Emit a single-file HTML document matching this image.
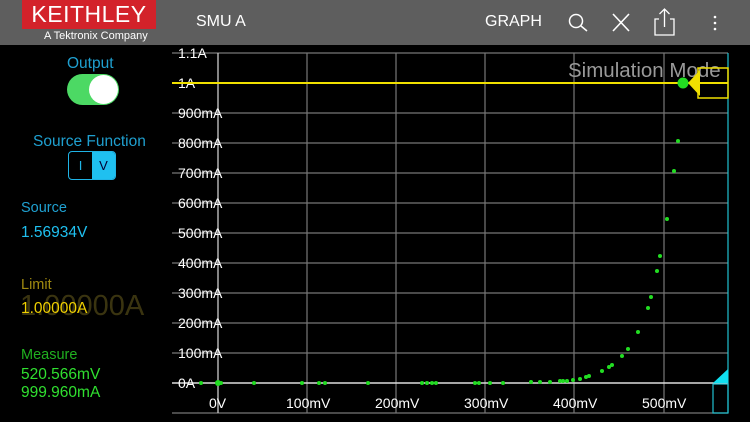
<!DOCTYPE html>
<html><head><meta charset="utf-8"><style>
body{margin:0;width:750px;height:422px;background:#000;overflow:hidden;font-family:"Liberation Sans",sans-serif;position:relative}
.bar{position:absolute;left:0;top:0;width:750px;height:45px;background:#5e5e5e}
.t{position:absolute;white-space:nowrap}
</style></head><body>
<div class="bar"></div>
<div class="t" style="left:22px;top:0;width:134px;height:29px;background:#d3222a;color:#fff;font-size:23px;line-height:29px;text-align:center;letter-spacing:0.5px">KEITHLEY</div>
<div class="t" style="left:44px;top:30px;color:#fff;font-size:11px">A Tektronix Company</div>
<div class="t" style="left:196px;top:13px;color:#fff;font-size:16px">SMU A</div>
<div class="t" style="left:485px;top:13px;color:#fff;font-size:16px">GRAPH</div>
<svg style="position:absolute;left:0;top:0" width="750" height="45">
<circle cx="576" cy="21" r="6.5" fill="none" stroke="#fff" stroke-width="1.5"/><line x1="581" y1="26" x2="587" y2="31" stroke="#fff" stroke-width="1.5"/>
<path d="M613 14 L629 31 M629 14 L613 31" stroke="#fff" stroke-width="1.6"/>
<path d="M659 19 H655 V35 H674 V19 H670 M664.5 27 V9 M659.5 14 L664.5 9 L669.5 14" fill="none" stroke="#fff" stroke-width="1.3"/>
<circle cx="715" cy="17" r="1.3" fill="#fff"/><circle cx="715" cy="23" r="1.3" fill="#fff"/><circle cx="715" cy="29" r="1.3" fill="#fff"/>
</svg>
<div class="t" style="left:67px;top:55px;color:#1fa0d0;font-size:15.5px">Output</div>
<div style="position:absolute;left:67px;top:74px;width:52px;height:31px;border-radius:16px;background:#4cd964"></div>
<div style="position:absolute;left:89px;top:75px;width:29px;height:29px;border-radius:15px;background:#fff"></div>
<div class="t" style="left:33px;top:133px;color:#1fa0d0;font-size:15.5px">Source Function</div>
<div style="position:absolute;left:68px;top:151px;width:46px;height:27px;border:1px solid #1fb4e6;border-radius:4px;overflow:hidden">
<div style="position:absolute;left:0;top:0;width:23px;height:27px;color:#1fb4e6;font-size:13px;line-height:27px;text-align:center">I</div>
<div style="position:absolute;left:23px;top:0;width:23px;height:27px;background:#1fc0f0;color:#003;font-size:13px;line-height:27px;text-align:center">V</div></div>
<div class="t" style="left:21px;top:200px;color:#1fa0d0;font-size:14.5px">Source</div>
<div class="t" style="left:21px;top:224px;color:#1fc0f0;font-size:15.5px">1.56934V</div>
<div class="t" style="left:21px;top:277px;color:#a08a10;font-size:14.5px">Limit</div>
<div class="t" style="left:20px;top:290px;color:#3a3410;font-size:29px">1.00000A</div>
<div class="t" style="left:21px;top:300px;color:#f0d000;font-size:15.5px">1.00000A</div>
<div class="t" style="left:21px;top:347px;color:#20b020;font-size:14.5px">Measure</div>
<div class="t" style="left:21px;top:366px;color:#30e030;font-size:15.5px">520.566mV</div>
<div class="t" style="left:21px;top:384px;color:#30e030;font-size:15.5px">999.960mA</div>
<svg style="position:absolute;left:0;top:0" width="750" height="422" font-family="Liberation Sans,sans-serif" font-size="14" fill="#fff">
<g stroke="#777" stroke-width="1.2">
<line x1="172" y1="53" x2="728" y2="53"/><line x1="172" y1="113" x2="728" y2="113"/><line x1="172" y1="143" x2="728" y2="143"/><line x1="172" y1="173" x2="728" y2="173"/><line x1="172" y1="203" x2="728" y2="203"/><line x1="172" y1="233" x2="728" y2="233"/><line x1="172" y1="263" x2="728" y2="263"/><line x1="172" y1="293" x2="728" y2="293"/><line x1="172" y1="323" x2="728" y2="323"/><line x1="172" y1="353" x2="728" y2="353"/><line x1="172" y1="413" x2="728" y2="413"/>
<line x1="307" y1="53" x2="307" y2="413"/><line x1="396" y1="53" x2="396" y2="413"/><line x1="485" y1="53" x2="485" y2="413"/><line x1="574" y1="53" x2="574" y2="413"/><line x1="664" y1="53" x2="664" y2="413"/>
</g>
<line x1="218" y1="53" x2="218" y2="413" stroke="#ccc" stroke-width="1.3"/>
<line x1="172" y1="383" x2="728" y2="383" stroke="#ddd" stroke-width="1.5"/>
<line x1="728" y1="53" x2="728" y2="413" stroke="#20c0d0" stroke-width="1.2"/>
<text x="178" y="58">1.1A</text><text x="178" y="88">1A</text><text x="178" y="118">900mA</text><text x="178" y="148">800mA</text><text x="178" y="178">700mA</text><text x="178" y="208">600mA</text><text x="178" y="238">500mA</text><text x="178" y="268">400mA</text><text x="178" y="298">300mA</text><text x="178" y="328">200mA</text><text x="178" y="358">100mA</text><text x="178" y="388">0A</text>
<text x="209" y="408">0V</text><text x="286" y="408">100mV</text><text x="375" y="408">200mV</text><text x="464" y="408">300mV</text><text x="553" y="408">400mV</text><text x="642" y="408">500mV</text>
<text x="568" y="77" font-size="20.5" fill="#999">Simulation Mode</text>
<line x1="172" y1="83" x2="728" y2="83" stroke="#f0e000" stroke-width="2"/>
<rect x="698" y="68" width="30" height="30" fill="none" stroke="#f0e000" stroke-width="1.5"/>
<path d="M688 83 L700 70 V96 Z" fill="#f0e000"/>
<rect x="713" y="384" width="15" height="29" fill="none" stroke="#20c0d0" stroke-width="1.2"/>
<path d="M713 383 L728 369 V383 Z" fill="#10e0f0"/>
<g fill="#22dd22">
<circle cx="683" cy="83" r="5.5"/>
<circle cx="201" cy="383" r="2"/><circle cx="218" cy="383" r="3"/><circle cx="221" cy="383" r="2"/><circle cx="254" cy="383" r="2"/><circle cx="302" cy="383" r="2"/><circle cx="319" cy="383" r="2"/><circle cx="325" cy="383" r="2"/><circle cx="368" cy="383" r="2"/><circle cx="422" cy="383" r="2"/><circle cx="427" cy="383" r="2"/><circle cx="432" cy="383" r="2"/><circle cx="436" cy="383" r="2"/><circle cx="475" cy="383" r="2"/><circle cx="479" cy="383" r="2"/><circle cx="490" cy="383" r="2"/><circle cx="503" cy="383" r="2"/><circle cx="531" cy="382" r="2"/><circle cx="540" cy="382" r="2"/><circle cx="550" cy="382" r="2"/><circle cx="560" cy="381" r="2"/><circle cx="563" cy="381" r="2"/><circle cx="567" cy="381" r="2"/><circle cx="573" cy="380" r="2"/><circle cx="580" cy="379" r="2"/><circle cx="586" cy="377" r="2"/><circle cx="589" cy="376" r="2"/><circle cx="602" cy="371" r="2"/><circle cx="609" cy="367" r="2"/><circle cx="612" cy="365" r="2"/><circle cx="622" cy="356" r="2"/><circle cx="628" cy="349" r="2"/><circle cx="638" cy="332" r="2"/><circle cx="648" cy="308" r="2"/><circle cx="651" cy="297" r="2"/><circle cx="657" cy="271" r="2"/><circle cx="660" cy="256" r="2"/><circle cx="667" cy="219" r="2"/><circle cx="674" cy="171" r="2"/><circle cx="678" cy="141" r="2"/>
</g>
</svg>
</body></html>
